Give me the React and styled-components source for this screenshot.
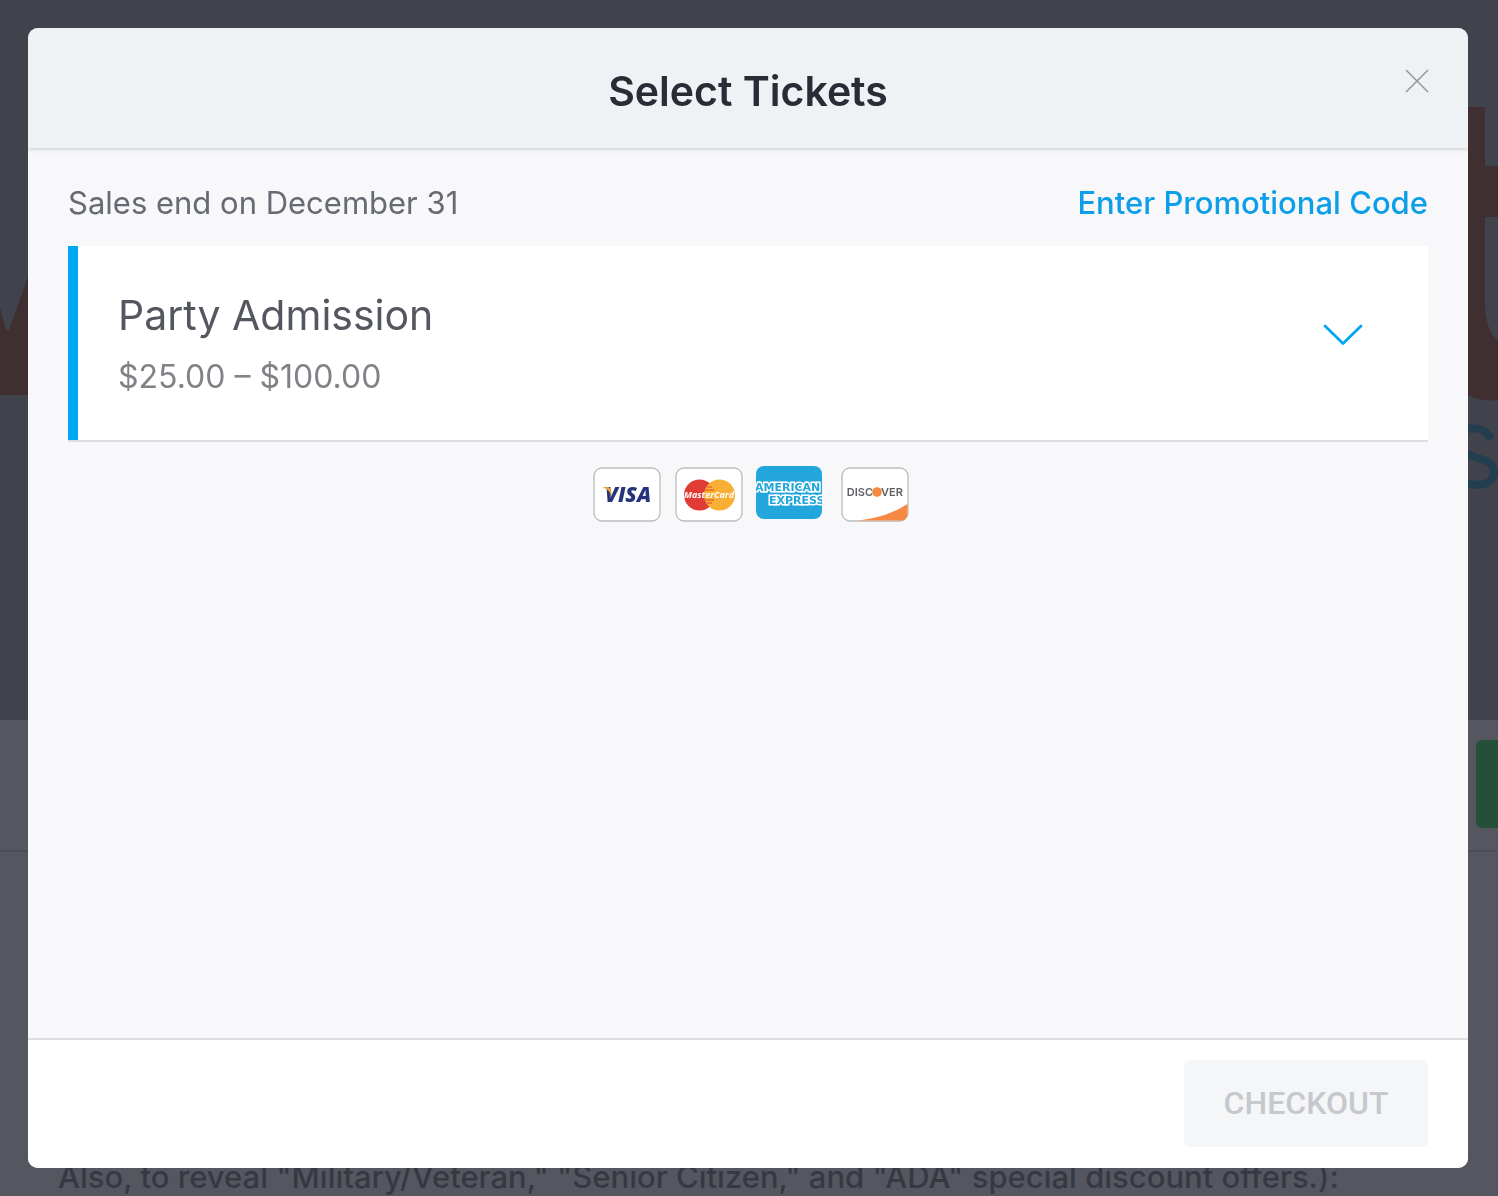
import React from "react";
import styled, { createGlobalStyle } from "styled-components";

const GlobalStyle = createGlobalStyle`
  *, *::before, *::after { box-sizing: border-box; }
  html, body { margin: 0; height: 100%; overflow: hidden; }
  body {
    font-family: Inter, "Liberation Sans", sans-serif;
    font-size: 31px;
    line-height: 40px;
    background: #54575f;
  }
  h1, h2, p { margin: 0; font-weight: 400; }
`;

const Page = styled.div`
  height: 100vh;
  overflow: hidden;
  background: #54575f;
  color: #363942;
`;

const Hero = styled.div`
  display: flex;
  justify-content: space-between;
  height: 720px;
  background: #40434b;
`;

const ActionBar = styled.div`
  display: flex;
  justify-content: flex-end;
  align-items: center;
  height: 132px;
  padding-bottom: 2px;
  overflow: hidden;
  border-bottom: 2px solid #4b4e56;
`;

const TicketsButton = styled.button`
  flex: none;
  width: 22px;
  height: 88px;
  padding: 0;
  border: 0;
  border-radius: 6px 0 0 6px;
  background: #234f3b;
`;

const Description = styled.p`
  && { font-weight: 500; }
  padding: 305px 58px 0;
  white-space: nowrap;
`;

const Dialog = styled.section`
  position: fixed;
  inset: 28px 30px 28px 28px;
  display: flex;
  flex-direction: column;
  overflow: hidden;
  border-radius: 10px;
  background: #f8f8fa;
`;

const Header = styled.header`
  position: relative;
  z-index: 1;
  flex: none;
  display: flex;
  align-items: center;
  justify-content: center;
  height: 120px;
  padding-top: 6px;
  background: #eef2f5;
  box-shadow: 0 1px 4px rgba(40, 44, 53, 0.25);
`;

const Title = styled.h1`
  && { font-weight: 600; }
  font-size: 41px;
  line-height: 48px;
  color: #282c35;
`;

const CloseButton = styled.button`
  position: absolute;
  top: 40px;
  right: 38px;
  display: flex;
  padding: 0;
  border: 0;
  background: none;
  cursor: pointer;
`;

const Body = styled.div`
  flex: 1;
  min-height: 0;
  padding: 35px 40px 0;
`;

const InfoRow = styled.div`
  display: flex;
  justify-content: space-between;
  align-items: center;
  margin-bottom: 23px;
  color: #666a73;
`;

const PromoLink = styled.a`
  color: #0c9ee8;
  font-weight: 500;
  text-decoration: none;
`;

const TicketShell = styled.div`
  border-bottom: 2px solid #dedee0;
`;

const Ticket = styled.button`
  display: flex;
  align-items: center;
  justify-content: space-between;
  width: 100%;
  height: 194px;
  padding: 2px 64px 0 40px;
  border: 0;
  border-left: 10px solid #00a8f3;
  background: #fff;
  font: inherit;
  text-align: left;
  cursor: pointer;
`;

const TicketText = styled.span`
  display: flex;
  flex-direction: column;
  gap: 18px;
`;

const TicketName = styled.span`
  font-size: 41px;
  line-height: 48px;
  color: #54575f;
`;

const TicketPrice = styled.span`
  font-size: 32px;
  color: #808288;
`;

const Chevron = styled.svg`
  margin-bottom: 18px;
`;

const Cards = styled.div`
  display: flex;
  justify-content: center;
  gap: 10px;
  padding-top: 22px;

  svg { overflow: visible; }
`;

const Footer = styled.footer`
  flex: none;
  display: flex;
  justify-content: flex-end;
  padding: 20px 40px 21px;
  border-top: 2px solid #dedee0;
  background: #fff;
`;

const CheckoutButton = styled.button`
  width: 244px;
  height: 87px;
  padding: 0 0 2px;
  border: 0;
  border-radius: 6px;
  background: #f4f6f8;
  color: #c6c8cd;
  font-family: Roboto, sans-serif;
  font-size: 32px;
  font-weight: 500;
`;

function CardBadge({ label, x, children }) {
  return (
    <svg width="73" height="60" viewBox="0 0 73 60" role="img" aria-label={label}>
      <g transform={`translate(${x} 4)`}>
        <rect x="0" y="0" width="66" height="53" rx="8" fill="#fff" stroke="#bcbcbe" strokeWidth="1.300" />
        {children}
      </g>
    </svg>
  );
}

function PaymentCards() {
  return (
    <Cards>
      <CardBadge label="Visa" x={7}>
        <text x="11" y="34" fontFamily="Open Sans, sans-serif" fontSize="21" fontWeight="800" fontStyle="italic" fill="#26337a">VISA</text>
        <path d="M8.500 19H14Q18 19.500 17.500 28Q15 21.500 8.500 19Z" fill="#e9a13b" />
      </CardBadge>
      <CardBadge label="MasterCard" x={6}>
        <circle cx="23.500" cy="27" r="15.500" fill="#e13b35" />
        <circle cx="43.500" cy="27" r="15.500" fill="#f9ae34" />
        <path d="M31 19H36M29 22H38M29 32H38M31 35H36" stroke="#e96b34" strokeWidth="1.500" />
        <text x="33" y="30" textAnchor="middle" fontFamily="Open Sans, sans-serif" fontSize="9" fontWeight="700" fontStyle="italic" fill="#fff">MasterCard</text>
      </CardBadge>
      <svg width="73" height="60" viewBox="0 0 73 60" role="img" aria-label="American Express">
        <clipPath id="amex"><rect x="3" y="2" width="66" height="53" rx="8" /></clipPath>
        <g clipPath="url(#amex)">
          <rect x="3" y="2" width="66" height="53" fill="#22a6dc" />
          <g fontFamily="DejaVu Sans, sans-serif" fontWeight="700" fontSize="11" fill="#22a6dc" stroke="#fff" strokeWidth="3" strokeLinejoin="miter" paintOrder="stroke">
            <text x="2" y="27">AMERICAN</text>
            <text x="16" y="40">EXPRESS</text>
          </g>
        </g>
      </svg>
      <CardBadge label="Discover" x={6}>
        <path d="M17 52.500Q46 49 65.500 36V45Q65.500 52.500 58 52.500Z" fill="#f68842" />
        <g fontFamily="Inter, sans-serif" fontSize="11" fontWeight="600" fill="#5e6063">
          <text x="31" y="28" textAnchor="end">DISC</text>
          <text x="39" y="28">VER</text>
        </g>
        <circle cx="35" cy="24" r="4.800" fill="#f68842" />
      </CardBadge>
    </Cards>
  );
}

export default function App() {
  return (
    <>
      <GlobalStyle />
      <Page aria-hidden="true">
        <Hero>
          <svg width="60" height="720" viewBox="0 0 60 720">
            <path d="M0 308L6 330H9L34 260H60V395H0Z" fill="#402f30" />
          </svg>
          <svg width="60" height="720" viewBox="0 0 60 720">
            <path d="M0 107H47V166H60V217H47V305Q48 332 60 340V400Q42 402 28 394L0 380Z" fill="#402f30" />
            <path d="M53 439C45 423 22 426 22 440C22 464 56 453 56 472C56 488 32 487 25 480" fill="none" stroke="#233e4e" strokeWidth="8" />
          </svg>
        </Hero>
        <ActionBar>
          <TicketsButton aria-label="Tickets" tabIndex={-1} />
        </ActionBar>
        <Description>
          Also, to reveal "Military/Veteran," "Senior Citizen," and "ADA" special discount offers.):
        </Description>
      </Page>
      <Dialog role="dialog" aria-modal="true" aria-labelledby="dialog-title">
        <Header>
          <Title id="dialog-title">Select Tickets</Title>
          <CloseButton aria-label="Close">
            <svg width="26" height="26" viewBox="0 0 26 26" fill="none" stroke="#94979b" strokeWidth="1.500">
              <path d="M2 2L24 24M24 2L2 24" />
            </svg>
          </CloseButton>
        </Header>
        <Body>
          <InfoRow>
            <p>Sales end on December 31</p>
            <PromoLink href="#promo">Enter Promotional Code</PromoLink>
          </InfoRow>
          <TicketShell>
            <Ticket aria-expanded="false">
              <TicketText>
                <TicketName>Party Admission</TicketName>
                <TicketPrice>$25.00 – $100.00</TicketPrice>
              </TicketText>
              <Chevron width="42" height="24" viewBox="0 0 42 24" fill="none" stroke="#00a8f3" strokeWidth="2.800" strokeLinecap="round" strokeLinejoin="round">
                <path d="M3 3L21 20.500L39 3" />
              </Chevron>
            </Ticket>
          </TicketShell>
          <PaymentCards />
        </Body>
        <Footer>
          <CheckoutButton disabled>CHECKOUT</CheckoutButton>
        </Footer>
      </Dialog>
    </>
  );
}
